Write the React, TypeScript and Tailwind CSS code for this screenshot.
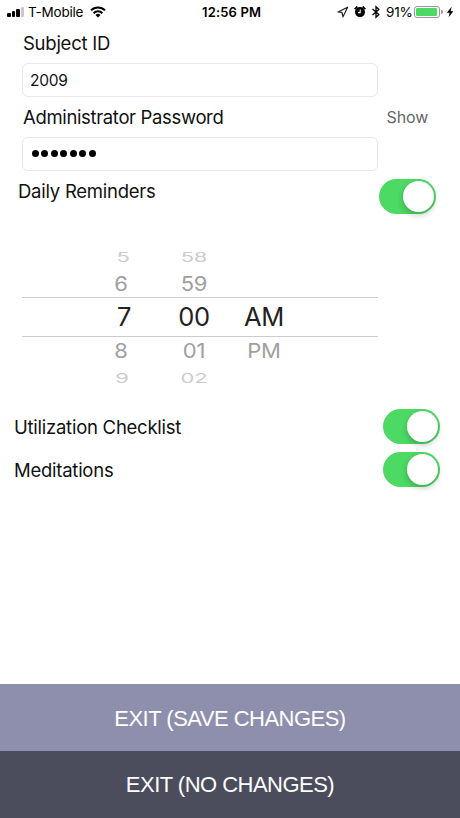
import { clsx } from "clsx";

type PickerItem = { text: string; className: string };

const pickerColumns: { name: string; className: string; items: PickerItem[] }[] = [
  {
    name: "hour",
    className: "w-[70px]",
    items: [
      { text: "5", className: "translate-x-0" },
      { text: "6", className: "-translate-x-[2px]" },
      { text: "7", className: "translate-x-px" },
      { text: "8", className: "-translate-x-[2px]" },
      { text: "9", className: "-translate-x-px" },
    ],
  },
  {
    name: "minute",
    className: "w-[72px]",
    items: [
      { text: "58", className: "" },
      { text: "59", className: "" },
      { text: "00", className: "" },
      { text: "01", className: "" },
      { text: "02", className: "" },
    ],
  },
  {
    name: "period",
    className: "w-[68px]",
    items: [
      { text: "", className: "" },
      { text: "", className: "" },
      { text: "AM", className: "" },
      { text: "PM", className: "" },
      { text: "", className: "" },
    ],
  },
];

// the outer rows are flattened so the wheel looks curved
const rowStyles = [
  "h-[20px] text-[#cccccc]",
  "h-[31px] pt-[2px] text-[#a0a0a0]",
  "h-[40px] text-[#222222]",
  "h-[28px] text-[#a0a0a0]",
  "h-[25px] text-[#cccccc]",
];
const glyphStyles = [
  "text-[22px] scale-y-[0.6]",
  "text-[22px] scale-y-[0.9]",
  "text-[25.5px] tracking-[-0.3px]",
  "text-[22px] scale-y-[0.9]",
  "text-[22px] scale-y-[0.62]",
];

function Switch({ label }: { label: string }) {
  return (
    <button
      type="button"
      role="switch"
      aria-checked="true"
      aria-label={label}
      className="flex h-[35px] w-[57px] items-center justify-end rounded-full bg-[#4cd964] pr-[2px]"
    >
      <span className="size-[31px] rounded-full bg-white shadow-[0_3px_6px_rgba(0,0,0,0.22)]" />
    </button>
  );
}

function StatusBar() {
  return (
    <div className="flex h-6 items-center text-[13.5px] leading-none tracking-[-0.2px] text-black">
      <div className="flex w-[202px] items-center pl-[7px]">
        <div className="flex h-[10px] items-end gap-[1px]">
          <span className="h-[4px] w-[3.5px] rounded-[1px] bg-black" />
          <span className="h-[6px] w-[3.5px] rounded-[1px] bg-black" />
          <span className="h-[8px] w-[3.5px] rounded-[1px] bg-black" />
          <span className="h-[10px] w-[3.5px] rounded-[1px] bg-[#c8c8c8]" />
        </div>
        <span className="ml-[4px] w-[55px] whitespace-nowrap pt-px">T-Mobile</span>
        <svg viewBox="0 0 16 12" className="ml-[7px] h-[12px] w-[16px]" fill="none" stroke="#000" strokeWidth="2">
          <path d="M1 4.4a10 10 0 0 1 14 0" />
          <path d="M3.6 7.2a6.2 6.2 0 0 1 8.8 0" />
          <path d="M8 11.6 5.5 9a3.6 3.6 0 0 1 5 0z" fill="#000" stroke="none" />
        </svg>
      </div>
      <span className="w-[135px] whitespace-nowrap text-[13px] font-semibold tracking-[0.15px]">12:56 PM</span>
      <svg viewBox="0 0 12 12" className="size-[12px]" fill="none" stroke="#222" strokeWidth="1.2" strokeLinejoin="round">
        <path d="M10.6 1.2 1 6l4 .4 1 4.4z" />
      </svg>
      <svg viewBox="0 0 14 14" className="ml-[4px] size-[14px]" fill="none">
        <circle cx="7" cy="7.1" r="5" fill="#000" />
        <path d="M1.6 4.2 4.4 1.7M9.6 1.7l2.8 2.5" stroke="#000" strokeWidth="1.7" />
        <path d="M7.2 4.4v3.2H5" stroke="#fff" strokeWidth="1.1" />
      </svg>
      <svg viewBox="0 0 10 14" className="ml-[4px] h-[14px] w-[10px]" fill="none" stroke="#000" strokeWidth="1.3">
        <path d="m1.5 4 6.4 5.6L5 12.2V1.8l2.9 2.6L1.5 10" />
      </svg>
      <span className="ml-[5px] w-[28px] whitespace-nowrap pt-px tracking-[-0.2px]">91%</span>
      <div className="h-[12px] w-[26px] rounded-[3px] border border-[#9a9a9a] p-px">
        <div className="h-full w-[21px] rounded-[1px] bg-[#4cd964]" />
      </div>
      <span className="ml-px h-[4px] w-[1.5px] rounded-r-full bg-[#9a9a9a]" />
      <svg viewBox="0 0 8 12" className="ml-[3px] h-[12px] w-[8px]">
        <path d="M5.7.8.8 6.7h2.8l-1 4.5 4.8-6H4.6z" />
      </svg>
    </div>
  );
}

function TimePicker() {
  return (
    <div className="ml-[22px] mt-[32px] h-[147px] w-[356px] pt-px">
      {rowStyles.map((row, i) => (
        <div
          key={row}
          className={clsx("flex items-center pl-[66px]", row, i === 2 && "-mt-px border-y border-[#cccccc]")}
        >
          {pickerColumns.map((column) => (
            <div key={column.name} className={clsx("flex justify-center", column.className)}>
              <span className={clsx("block leading-none", glyphStyles[i], column.items[i].className)}>
                {column.items[i].text}
              </span>
            </div>
          ))}
        </div>
      ))}
    </div>
  );
}

export default function App() {
  return (
    <div className="flex h-[818px] w-[460px] flex-col overflow-hidden bg-white font-['Inter','Liberation_Sans',sans-serif] text-[18.5px] tracking-[-0.25px] text-[#111111]">
      <StatusBar />

      <div className="pl-[22px]">
        <div className="flex h-[39px] items-center pl-px">Subject ID</div>
        <div className="flex h-[34px] w-[356px] items-center rounded-[6px] border border-[#e8e8e8] pl-[7px] pt-px text-[15.5px]">
          2009
        </div>
        <div className="flex h-[40px] items-center pl-px">
          <span className="w-[363.5px] pt-[2px] tracking-[-0.35px]">Administrator Password</span>
          <button type="button" className="text-[16px] tracking-[-0.1px] text-[#66666b]">Show</button>
        </div>
        <div className="flex h-[34px] w-[356px] items-center gap-[2.6px] rounded-[6px] border border-[#e8e8e8] pl-[8.5px] pb-px">
          {Array.from({ length: 7 }, (_, i) => (
            <span key={i} className="size-[7px] rounded-full bg-black" />
          ))}
        </div>
      </div>

      <div className="flex pl-[18px] pt-[8px]">
        <span className="w-[360.5px] pt-[2px] leading-[20px]">Daily Reminders</span>
        <Switch label="Daily Reminders" />
      </div>

      <TimePicker />

      <div className="mt-[16px] flex flex-col gap-[8px] pl-[14px]">
        <div className="flex items-center">
          <span className="w-[369px] pt-[2px]">Utilization Checklist</span>
          <Switch label="Utilization Checklist" />
        </div>
        <div className="flex items-center">
          <span className="w-[369px] pt-[2px]">Meditations</span>
          <Switch label="Meditations" />
        </div>
      </div>

      <div className="mt-auto flex flex-col font-['Liberation_Sans',Arial,sans-serif] text-[22px] tracking-[-0.52px] text-white">
        <button type="button" className="h-[67px] bg-[#8e8fad] pt-px">EXIT (SAVE CHANGES)</button>
        <button type="button" className="h-[67px] bg-[#4c4d5c]">EXIT (NO CHANGES)</button>
      </div>
    </div>
  );
}
